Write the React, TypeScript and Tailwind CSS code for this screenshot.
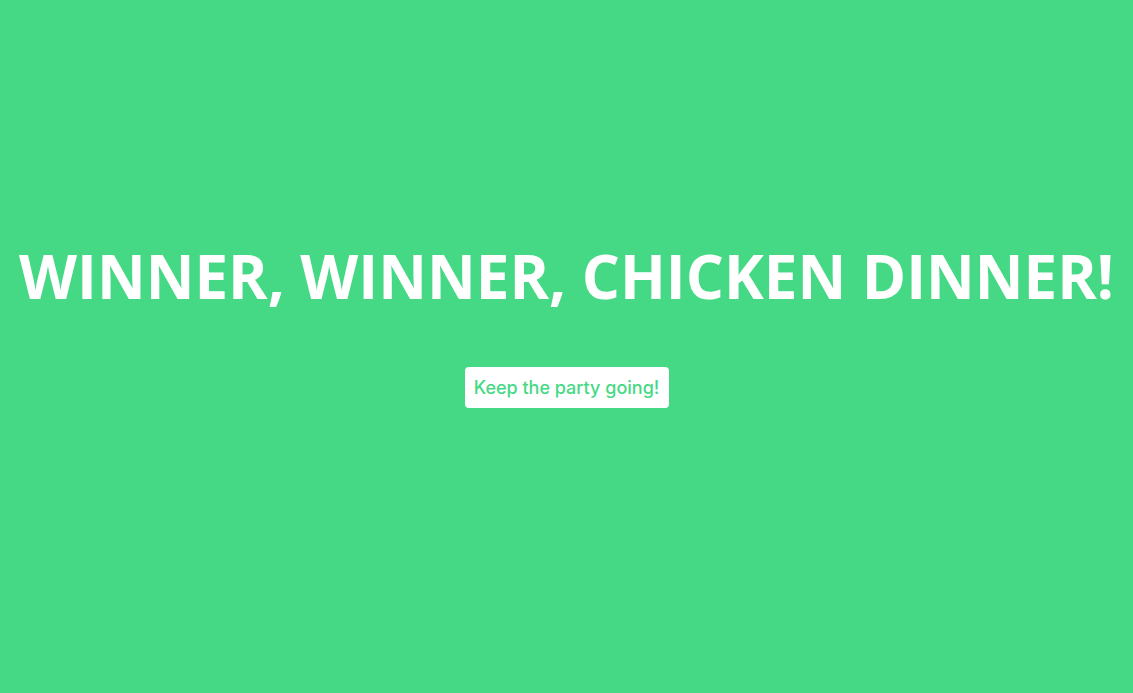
export default function App() {
  return (
    <div className="min-h-screen bg-[#46d985] flex flex-col items-center justify-center pb-[49px]">
      <h1 className="text-[60px] leading-[1.362] font-bold text-white font-['Open_Sans',sans-serif] whitespace-nowrap">
        WINNER, WINNER, CHICKEN DINNER!
      </h1>
      <button className="mt-[49px] h-[41px] w-[204px] bg-white rounded-[4px] text-[18px] font-medium text-[#46d985] font-['Inter',sans-serif]">
        Keep the party going!
      </button>
    </div>
  );
}
